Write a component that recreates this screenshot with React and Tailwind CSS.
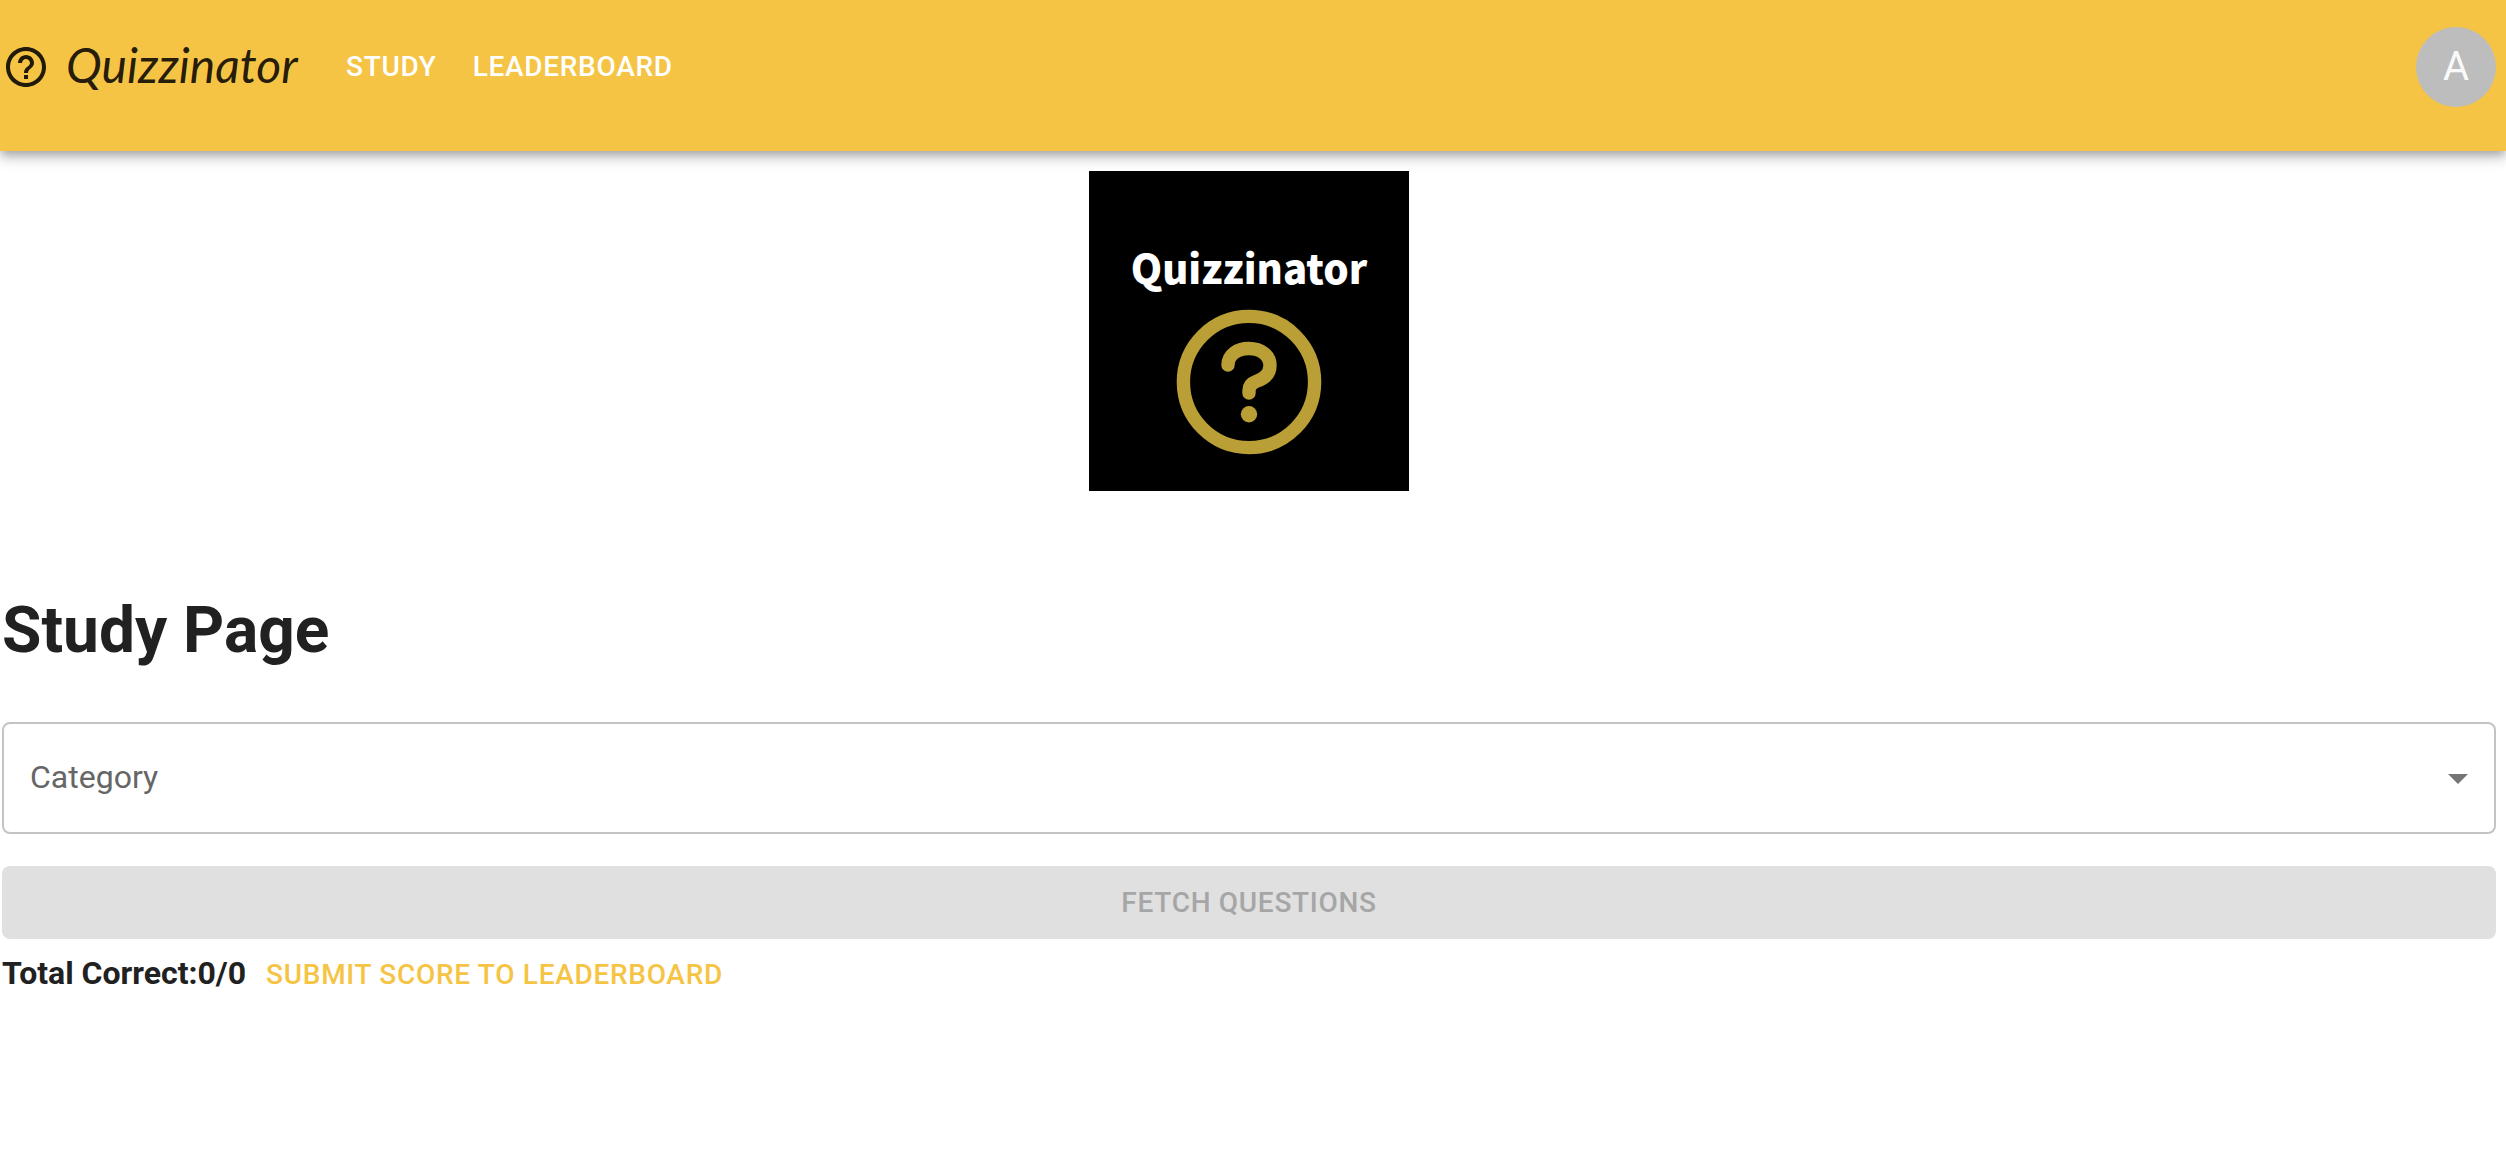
import React, { useState } from "react";

const NAV_ITEMS = ["Study", "Leaderboard"];
const CATEGORIES = ["General Knowledge", "Science", "History", "Geography"];

function HelpIcon() {
  return (
    <svg viewBox="0 0 24 24" className="size-12 shrink-0 fill-current" aria-hidden="true">
      <path d="M11 18h2v-2h-2v2zm1-16C6.48 2 2 6.48 2 12s4.48 10 10 10 10-4.48 10-10S17.52 2 12 2zm0 18c-4.41 0-8-3.59-8-8s3.59-8 8-8 8 3.59 8 8-3.59 8-8 8zm0-14c-2.21 0-4 1.79-4 4h2c0-1.1.9-2 2-2s2 .9 2 2c0 2-3 1.75-3 5h2c0-2.25 3-2.5 3-5 0-2.21-1.79-4-4-4z" />
    </svg>
  );
}

function Header() {
  return (
    <header className="flex items-start justify-between bg-[#f5c445] pt-[27px] pr-2.5 pb-11 pl-0.5 shadow-[0_4px_8px_-2px_rgba(0,0,0,0.2),0_8px_10px_0_rgba(0,0,0,0.14),0_2px_20px_0_rgba(0,0,0,0.12)]">
      <div className="flex h-20 items-center">
        <a href="#home" className="flex items-center gap-4 text-black/87">
          <HelpIcon />
          <span className="w-[248px] pb-1 font-['Lato','Open_Sans',sans-serif] text-[48px] leading-[64px] font-normal italic">
            Quizzinator
          </span>
        </a>
        <nav className="ml-8 flex gap-9">
          {NAV_ITEMS.map((item) => (
            <a
              key={item}
              href={`#${item.toLowerCase()}`}
              className="text-[28px] leading-[48px] font-medium tracking-wide text-white uppercase"
            >
              {item}
            </a>
          ))}
        </nav>
      </div>
      <button
        type="button"
        aria-label="Account"
        className="flex size-20 items-center justify-center rounded-full bg-[#bdbdbd] text-[40px] leading-none text-[#fafafa]"
      >
        A
      </button>
    </header>
  );
}

function Logo() {
  return (
    <div className="mx-auto flex size-80 flex-col items-center bg-black pt-[66px]">
      <span className="font-['Noto_Sans_CJK_JP','Noto_Sans_CJK_SC',sans-serif] text-[40px] leading-[60px] font-black text-white">
        Quizzinator
      </span>
      <svg viewBox="0 0 146 146" className="mt-3 size-[146px]" fill="none" aria-hidden="true">
        <circle cx="73" cy="73" r="65.6" stroke="#b99f35" strokeWidth="13.4" />
        <path
          d="M52 56C52 46 61 39.5 73 39.5C85 39.5 94 46.5 94 56.5C94 64 89 69.5 80 72.5C76 74 73 77 73 81.5V84"
          stroke="#b99f35"
          strokeWidth="13.4"
          strokeLinecap="round"
        />
        <circle cx="73" cy="105.3" r="8.2" fill="#b99f35" />
      </svg>
    </div>
  );
}

function CategorySelect({ value, onChange }) {
  return (
    <div className="relative">
      <select
        id="category"
        value={value}
        onChange={(event) => onChange(event.target.value)}
        className="block h-28 w-full appearance-none rounded-lg border-2 border-[#c4c4c4] bg-white px-[26px] text-[32px] text-[#212121]"
      >
        <option value="" />
        {CATEGORIES.map((category) => (
          <option key={category} value={category}>
            {category}
          </option>
        ))}
      </select>
      <label
        htmlFor="category"
        className={
          value
            ? "pointer-events-none absolute -top-4 left-5 bg-white px-2 text-2xl text-[#666]"
            : "pointer-events-none absolute top-8 left-7 text-[32px] leading-[46px] text-[#666]"
        }
      >
        Category
      </label>
      <svg
        viewBox="0 0 24 24"
        className="pointer-events-none absolute inset-y-0 right-3.5 my-auto size-12 fill-[#757575]"
        aria-hidden="true"
      >
        <path d="M7 10l5 5 5-5z" />
      </svg>
    </div>
  );
}

export default function App() {
  const [category, setCategory] = useState("");
  return (
    <div className="min-h-screen bg-white font-[Roboto,sans-serif] text-[#212121]">
      <Header />
      <main className="pt-5 pr-2.5 pb-10 pl-0.5">
        <Logo />
        <h1 className="mt-[92px] text-[64px] leading-[96px] font-bold">Study Page</h1>
        <div className="mt-[43px] flex flex-col gap-8">
          <CategorySelect value={category} onChange={setCategory} />
          <button
            type="button"
            disabled={!category}
            className="w-full rounded-lg bg-[#f5c445] py-3 text-[28px] leading-[49px] font-medium tracking-wide text-black/87 uppercase disabled:bg-[#e0e0e0] disabled:text-[#a6a6a6]"
          >
            Fetch Questions
          </button>
        </div>
        <div className="mt-2.5 flex items-baseline gap-5">
          <strong className="text-[32px] leading-[48px] font-bold">Total Correct:0/0</strong>
          <button
            type="button"
            className="text-[28px] leading-[48px] font-medium tracking-wide text-[#f5c445] uppercase"
          >
            Submit score to leaderboard
          </button>
        </div>
      </main>
    </div>
  );
}
